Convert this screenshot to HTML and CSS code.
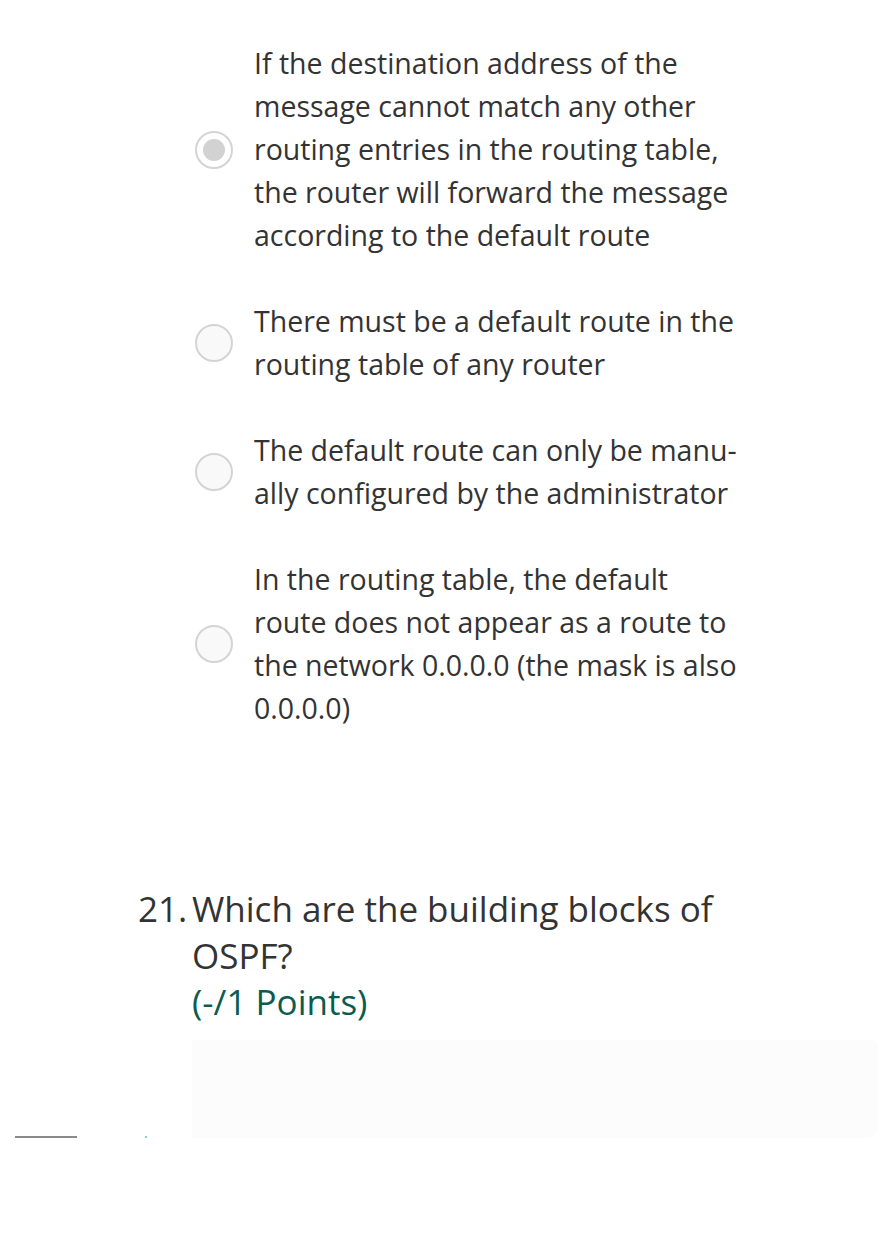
FILE: index.html
```html
<!DOCTYPE html>
<html lang="en">
<head>
<meta charset="utf-8">
<title>Quiz</title>
<link rel="stylesheet" href="styles.css">
</head>
<body>
<main class="page">
  <div class="options">
    <div class="option">
      <span class="radio checked"><span class="dot"></span></span>
      <div class="label">If the destination address of the<br>message cannot match any other<br>routing entries in the routing table,<br>the router will forward the message<br>according to the default route</div>
    </div>
    <div class="option">
      <span class="radio"></span>
      <div class="label">There must be a default route in the<br>routing table of any router</div>
    </div>
    <div class="option">
      <span class="radio"></span>
      <div class="label">The default route can only be manu-<br>ally configured by the administrator</div>
    </div>
    <div class="option">
      <span class="radio"></span>
      <div class="label">In the routing table, the default<br>route does not appear as a route to<br>the network 0.0.0.0 (the mask is also<br>0.0.0.0)</div>
    </div>
  </div>

  <section class="question">
    <div class="q-num">21.</div>
    <div class="q-body">
      <div class="q-title">Which are the building blocks of<br>OSPF?</div>
      <div class="q-points">(-/1 Points)</div>
    </div>
  </section>

  <div class="bottom">
    <div class="progress"><span class="bar"></span><span class="tick"></span></div>
    <div class="answer-box"></div>
  </div>
</main>
</body>
</html>
```

FILE: styles.css
```css
html, body {
  margin: 0;
  padding: 0;
  background: #ffffff;
}

body {
  font-family: "Open Sans", "Noto Sans", sans-serif;
  color: #333333;
}

.page {
  width: 880px;
  height: 1247px;
  overflow: hidden;
}

.options {
  display: flex;
  flex-direction: column;
  gap: 43px;
  padding: 42px 0 0 195px;
}

.option {
  display: flex;
  align-items: center;
  gap: 21px;
}

.radio {
  flex: none;
  width: 34px;
  height: 34px;
  border: 2px solid #d4d4d4;
  border-radius: 50%;
  background: #f9f9f9;
  display: flex;
  align-items: center;
  justify-content: center;
}

.radio .dot {
  width: 22px;
  height: 22px;
  border-radius: 50%;
  background: #d2d2d2;
}

.radio.checked {
  background: #ffffff;
}

.label {
  font-size: 28.5px;
  line-height: 43px;
  white-space: nowrap;
}

.question {
  display: flex;
  margin-top: 156px;
  padding-left: 138px;
  font-size: 35px;
  line-height: 46.5px;
}

.q-num {
  width: 54px;
  flex: none;
}

.q-points {
  color: #0b5c4f;
}

.bottom {
  position: relative;
  margin-top: 14px;
  height: 120px;
}

.answer-box {
  margin-left: 192px;
  width: 686px;
  height: 98px;
  background: #fcfcfc;
  border-radius: 0 6px 12px 0;
}

.progress {
  position: absolute;
  left: 15px;
  top: 96px;
  width: 140px;
  height: 2px;
}

.progress .bar {
  position: absolute;
  left: 0;
  top: 0;
  width: 62px;
  height: 2px;
  background: #8a8a8a;
}

.progress .tick {
  position: absolute;
  left: 130px;
  top: 0;
  width: 2px;
  height: 2px;
  background: #7fd6d0;
}
```
